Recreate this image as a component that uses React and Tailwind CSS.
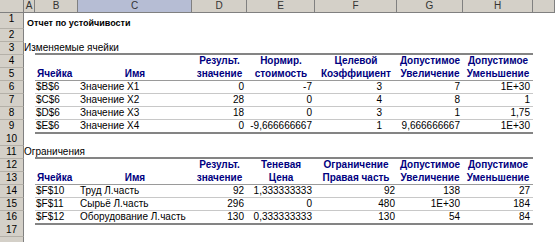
import React from "react";

const COLS = "grid-cols-[24px_11px_43px_114px_55px_68px_82px_66px_70px_1fr]";
const INNER = "grid-cols-[43px_114px_55px_68px_82px_66px_70px]";

function RowHead({ n }) {
  return (
    <div className="bg-[#d4d0c8] border-b border-r border-b-[#b4b0a8] border-r-[#808080] text-center text-[10px] leading-[12px] text-black">
      {n}
    </div>
  );
}

function Row({ n, a, cells, line = "", h = "h-[13px]" }) {
  return (
    <div className={`grid ${COLS} ${h}`}>
      <RowHead n={n} />
      <div className="relative z-10 whitespace-nowrap overflow-visible">{a}</div>
      <div className={`col-span-7 grid ${INNER} ${line}`}>{cells}</div>
      <div />
    </div>
  );
}

const L = ({ children, pl = "pl-[1px]" }) => (
  <div className={`${pl} whitespace-nowrap overflow-visible text-[10px] leading-[12px] text-black`}>{children}</div>
);
const R = ({ children, pr = "pr-[3px]" }) => (
  <div className={`${pr} text-right whitespace-nowrap text-[10px] leading-[12px] text-black`}>{children}</div>
);
const H = ({ children, align = "text-center" }) => (
  <div className={`${align} whitespace-nowrap text-[10px] leading-[12px] font-bold text-[#000080]`}>{children}</div>
);

function DataRow({ n, r, line, fTop }) {
  return (
    <Row
      n={n}
      line={line}
      cells={
        <>
          <L>{r[0]}</L>
          <L pl="pl-[2px]">{r[1]}</L>
          <R>{r[2]}</R>
          <R>{r[3]}</R>
          <R pr={fTop ? "pr-[15px]" : "pr-[2px]"}>{r[4]}</R>
          <R>{r[5]}</R>
          <R>{r[6]}</R>
        </>
      }
    />
  );
}

const top = [
  ["$B$6", "Значение X1", "0", "-7", "3", "7", "1E+30"],
  ["$C$6", "Значение X2", "28", "0", "4", "8", "1"],
  ["$D$6", "Значение X3", "18", "0", "3", "1", "1,75"],
  ["$E$6", "Значение X4", "0", "-9,666666667", "1", "9,666666667", "1E+30"],
];
const bottom = [
  ["$F$10", "Труд Л.часть", "92", "1,333333333", "92", "138", "27"],
  ["$F$11", "Сырьё Л.часть", "296", "0", "480", "1E+30", "184"],
  ["$F$12", "Оборудование Л.часть", "130", "0,333333333", "130", "54", "84"],
];

const THICK = "border-b-2 border-[#848484]";
const MID = "border-b border-[#9a9a9a]";
const THIN = "border-b border-[#c8c8c8]";

export default function App() {
  const letters = ["A", "B", "C", "D", "E", "F", "G", "H", ""];
  return (
    <div className="w-[555px] h-[242px] overflow-hidden bg-white font-['Liberation_Sans',Arial,sans-serif]">
      <div className={`grid ${COLS} h-[13px] bg-[#d4d0c8]`}>
        <div className="border-r border-b border-[#808080]" />
        {letters.map((l, i) => (
          <div
            key={i}
            className={`border-r border-b border-[#808080] text-center text-[10px] leading-[12px] text-[#333] ${
              l === "C" ? "bg-[#b6bdd4]" : ""
            }`}
          >
            {l}
          </div>
        ))}
      </div>
      <Row
        n="1"
        h="h-[16px]"
        a={<div className="pl-[3px] pt-[4px] text-[9px] leading-[12px] font-bold text-black">Отчет по устойчивости</div>}
      />
      <Row n="2" />
      <Row n="3" line={THICK} a={<div className="text-[10px] leading-[12px] text-black">Изменяемые ячейки</div>} />
      <Row
        n="4"
        cells={
          <>
            <div />
            <div />
            <H>Результ.</H>
            <H>Нормир.</H>
            <H>Целевой</H>
            <H>Допустимое</H>
            <H>Допустимое</H>
          </>
        }
      />
      <Row
        n="5"
        line={MID}
        cells={
          <>
            <H align="text-left pl-[2px]">Ячейка</H>
            <H>Имя</H>
            <H>значение</H>
            <H>стоимость</H>
            <H>Коэффициент</H>
            <H>Увеличение</H>
            <H>Уменьшение</H>
          </>
        }
      />
      {top.map((r, i) => (
        <DataRow key={i} n={String(6 + i)} r={r} line={i === 3 ? THICK : THIN} fTop />
      ))}
      <Row n="10" />
      <Row n="11" line={THICK} a={<div className="text-[10px] leading-[12px] text-black">Ограничения</div>} />
      <Row
        n="12"
        cells={
          <>
            <div />
            <div />
            <H>Результ.</H>
            <H>Теневая</H>
            <H>Ограничение</H>
            <H>Допустимое</H>
            <H>Допустимое</H>
          </>
        }
      />
      <Row
        n="13"
        line={MID}
        cells={
          <>
            <H align="text-left pl-[2px]">Ячейка</H>
            <H>Имя</H>
            <H>значение</H>
            <H>Цена</H>
            <H>Правая часть</H>
            <H>Увеличение</H>
            <H>Уменьшение</H>
          </>
        }
      />
      {bottom.map((r, i) => (
        <DataRow key={i} n={String(14 + i)} r={r} line={i === 2 ? THICK : THIN} />
      ))}
      <Row n="17" />
      <Row n="" />
    </div>
  );
}
